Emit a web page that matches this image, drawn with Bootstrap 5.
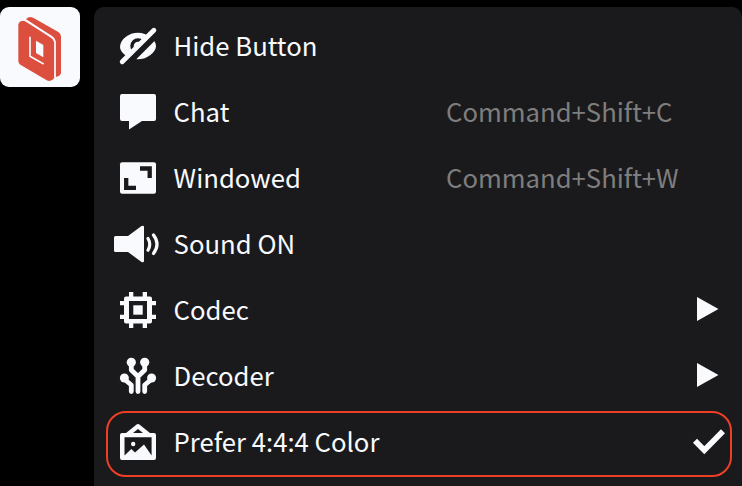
<!DOCTYPE html>
<html lang="en">
<head>
<meta charset="utf-8">
<title>Overlay menu</title>
<link href="https://cdn.jsdelivr.net/npm/bootstrap@5.3.0/dist/css/bootstrap.min.css" rel="stylesheet">
<style>
body{background:#000;font-family:"Noto Sans CJK SC","Noto Sans",sans-serif;color:#f9fafe;height:486px}
.logo-btn{width:80px;height:80px;margin-top:7px;border-radius:9px;background:#f9fafe}
.overlay-menu{width:648px;height:479px;margin:7px 0 0 14px;padding:7px 10px 0 12px;background:#1a1a1c;border-radius:10px 10px 0 0}
.menu-row{height:66px;border:2px solid transparent;padding:0 5px 0 6px;font-size:25.7px;line-height:38px;white-space:nowrap}
.menu-row.picked{border-color:#ec3f24;border-radius:20px;margin-top:1px;padding-bottom:2px}
.glyph{width:48px;height:48px;flex:none;fill:#f9fafe}
.label-col{width:284px;padding:0 0 4px 11.6px}
.keys{color:#7e7e7e;padding-bottom:4px}
.tail{width:36px;height:48px;fill:#f9fafe;flex:none}
</style>
<script src="https://cdn.jsdelivr.net/npm/bootstrap@5.3.0/dist/js/bootstrap.bundle.min.js"></script>
</head>
<body class="d-flex align-items-start overflow-hidden">
<button class="logo-btn btn border-0 p-0 flex-shrink-0" aria-label="Menu">
<svg class="d-block" width="80" height="80" viewBox="0 21 240 240">
<g fill="#dc4f3f"><path d="M55 75Q56 63 68 62Q73 62 78 65L154 114Q163 120 163 130V234Q158 242 148 243Q144 243 140 241L61 194Q55 190 55 183Z"/><path d="M78 58Q83 51 92 51Q97 52 101 54L175 96Q183 101 183 110V220Q180 229 167 231V128Q167 117 158 111Z"/></g>
<path d="M78 61L154 109Q165 116 165 130V233" fill="none" stroke="#f9fafe" stroke-width="4"/>
<path d="M90 110V169L131 192" fill="none" stroke="#f9fafe" stroke-width="5"/><path d="M108 122L130 135V172L108 159Z" fill="#f9fafe"/></svg>
</button>
<nav class="overlay-menu d-flex flex-column flex-shrink-0">
<div class="menu-row d-flex align-items-center">
<svg class="glyph" viewBox="0 0 48 48"><path d="M6 24C6 16 15 9.700 24 9.700S42 16.500 42 23C42 29.500 33 36.300 24 36.300S6 30 6 24Z"/><circle cx="24" cy="23" r="6" fill="none" stroke="#1a1a1c" stroke-width="3.400"/><path d="M12 42L45 9" stroke="#1a1a1c" stroke-width="6.400"/><path d="M8.200 38.800L39.900 7.200" stroke="#f9fafe" stroke-width="4.800" stroke-linecap="round"/></svg>
<span class="label-col">Hide Button</span></div>
<div class="menu-row d-flex align-items-center">
<svg class="glyph" viewBox="0 0 48 48"><path d="M8 5H40Q42 5 42 7V30Q42 32 40 32H28L15 40.500V32H8Q6 32 6 30V7Q6 5 8 5Z"/></svg>
<span class="label-col">Chat</span><span class="keys">Command+Shift+C</span></div>
<div class="menu-row d-flex align-items-center">
<svg class="glyph" viewBox="0 0 48 48"><rect x="6" y="7.300" width="36" height="31.500" rx="2"/><path d="M26 13.500H35.700V23M22 32.800H12.200V23" fill="none" stroke="#1a1a1c" stroke-width="4.300"/></svg>
<span class="label-col">Windowed</span><span class="keys">Command+Shift+W</span></div>
<div class="menu-row d-flex align-items-center">
<svg class="glyph" viewBox="0 0 48 48"><path d="M1.500 15H14L27.500 5Q30 4 30 6V40Q30 42 27.500 41L14 31H1.500Q0 31 0 29.500V16.500Q0 15 1.500 15Z"/><path d="M34 17.500Q37.500 23.300 34 29.200M39.500 14Q46.500 23.300 39.500 32.500" fill="none" stroke="#f9fafe" stroke-width="3.200" stroke-linecap="round"/></svg>
<span class="label-col">Sound ON</span></div>
<div class="menu-row d-flex align-items-center">
<svg class="glyph" viewBox="0 0 48 48"><path d="M15 5h4.300v4.500h9.400V5h4.300v4.500h3Q38 9.500 38 11.500V14h4v4.300h-4v9.400h4V32h-4v2.500q0 2-2 2h-3V41h-4.300v-4.500h-9.400V41H15v-4.500h-3q-2 0-2-2V32H6v-4.300h4v-9.400H6V14h4v-2.500q0-2 2-2h3ZM15 14v18h18V14Z" fill-rule="evenodd"/><rect x="19.300" y="18.300" width="9.400" height="9.400"/></svg>
<span class="label-col">Codec</span><svg class="tail ms-auto" viewBox="0 0 36 48"><path d="M8 10V34L29.500 22Z"/></svg></div>
<div class="menu-row d-flex align-items-center">
<svg class="glyph" viewBox="0 0 48 48"><circle cx="17.300" cy="9.300" r="4.600"/><circle cx="30.700" cy="9.300" r="4.600"/><circle cx="10.400" cy="25" r="4.500"/><circle cx="37.600" cy="25" r="4.500"/><path d="M17.300 10V17L24 23.500L30.700 17V10M24 23V38.600M10.200 26L17.300 32V38.600M37.800 26L30.700 32V38.600" fill="none" stroke="#f9fafe" stroke-width="4.800" stroke-linecap="round" stroke-linejoin="round"/></svg>
<span class="label-col">Decoder</span><svg class="tail ms-auto" viewBox="0 0 36 48"><path d="M8 10V34L29.500 22Z"/></svg></div>
<div class="menu-row picked d-flex align-items-center">
<svg class="glyph" viewBox="0 0 48 48"><path d="M8 14H12L22 6Q24 4 26 6L36 14H40Q42 14 42 16V39Q42 41 40 41H8Q6 41 6 39V16Q6 14 8 14Z"/><path d="M19 14L24 10L29 14ZM10.500 18.300V36.500L17.300 30L21 33.500L30 25.500L37.600 36.500V18.300Z" fill="#1a1a1c"/><circle cx="19.200" cy="25" r="2.200"/></svg>
<span class="label-col">Prefer 4:4:4 Color</span><svg class="tail ms-auto" viewBox="0 0 36 48"><path d="M6 21.700L15.300 31.200L34 12.300" fill="none" stroke="#f9fafe" stroke-width="5.700"/></svg></div>
</nav>
</body>
</html>
